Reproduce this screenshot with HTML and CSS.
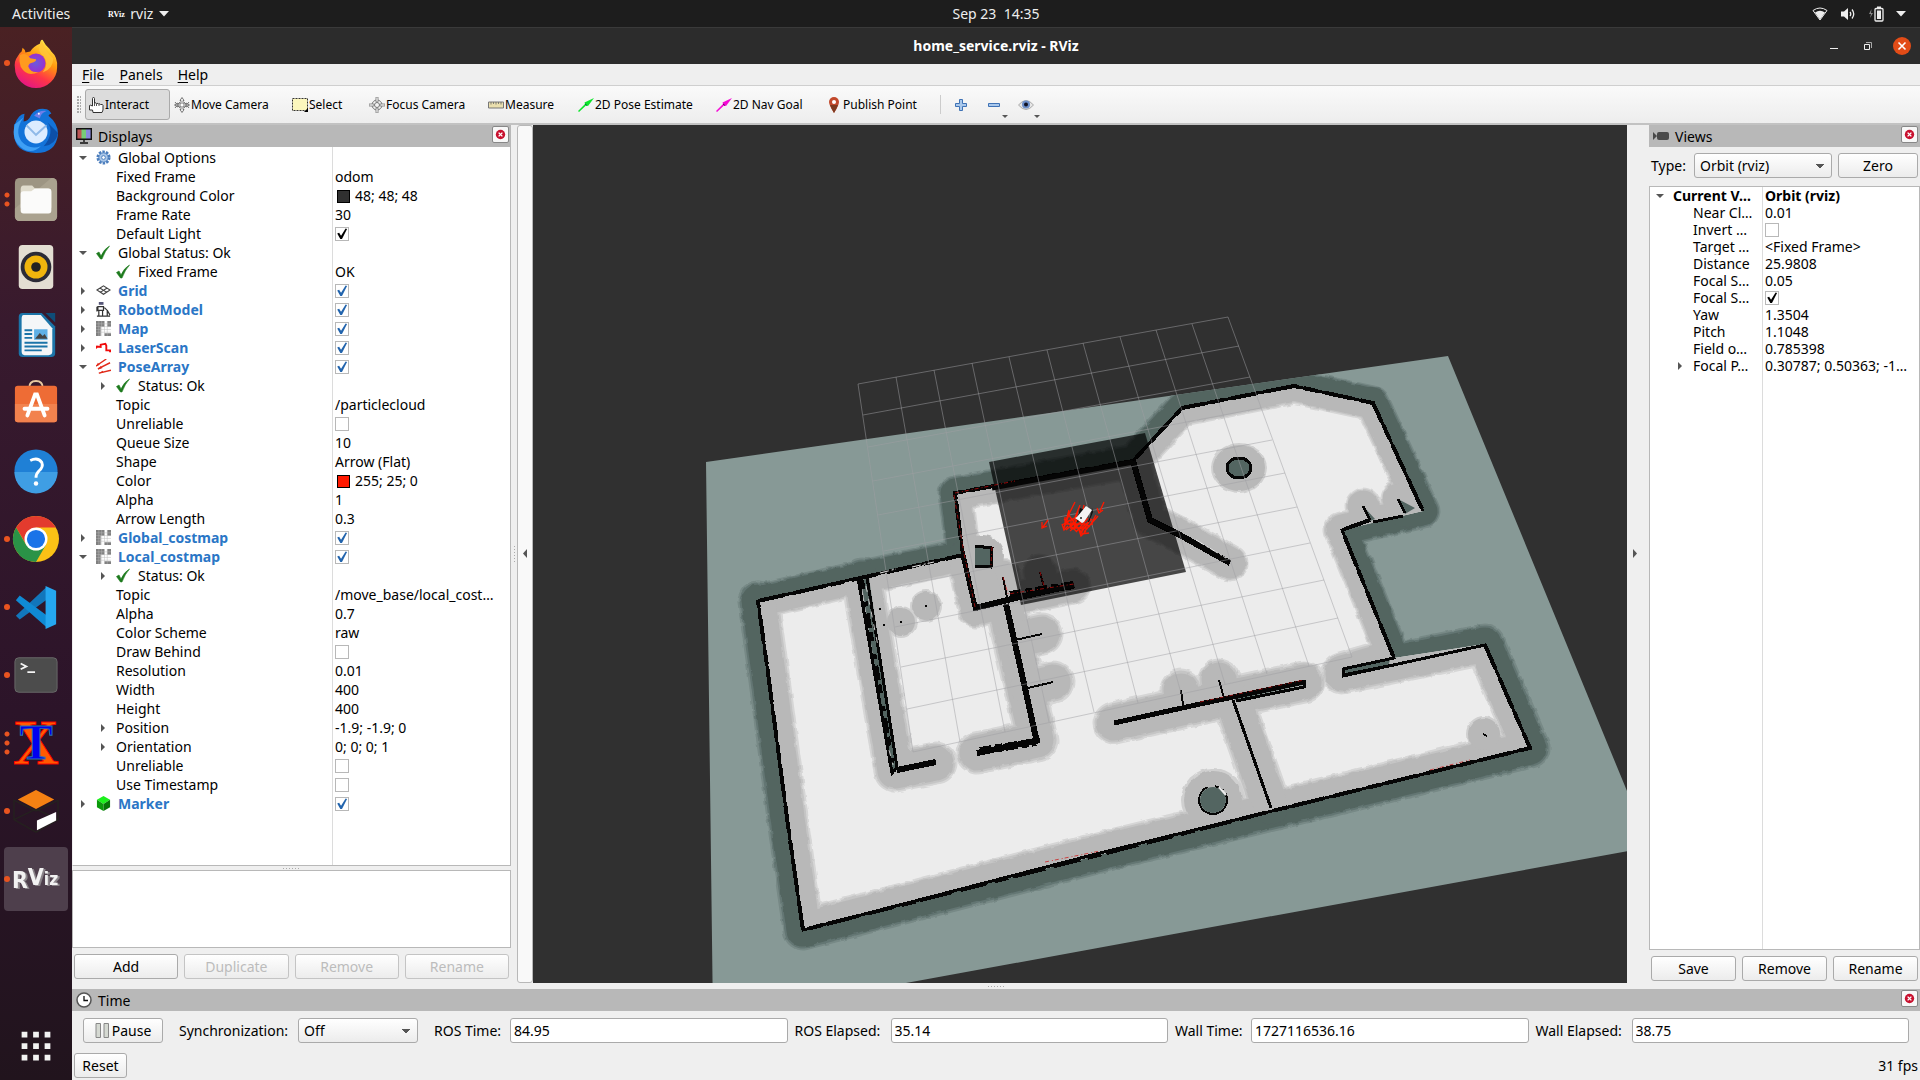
FILE: index.html
```html
<!DOCTYPE html>
<html lang="en">
<head>
<meta charset="utf-8">
<title>home_service.rviz - RViz</title>
<link rel="stylesheet" href="styles.css">
</head>
<body>
<svg class="defs" width="0" height="0" aria-hidden="true">
  <defs>
    <symbol id="i-down" viewBox="0 0 10 10"><path d="M1 3h8L5 7z" fill="#555"/></symbol>
    <symbol id="i-right" viewBox="0 0 10 10"><path d="M3 1v8l4-4z" fill="#555"/></symbol>
    <symbol id="i-ok" viewBox="0 0 15 15"><path d="M.5 8.500L3 7l2 4Q8 4 13.500 1Q9 6 6 14H4.500z" fill="#1d7a1d" stroke="#1d7a1d" stroke-width=".6"/></symbol>
    <symbol id="i-map" viewBox="0 0 16 16"><path d="M0 0h16v16H0z" fill="#fff"/><path d="M0 0h9v6H5v10H0zM12 0h4v6h-4zM9 13h7v3H9z" fill="#808080"/><path d="M3 0v16M6 0v16M9 0v16M12 0v16M0 3h16M0 6h16M0 9h16M0 12h16" stroke="#bbb" stroke-width=".5"/></symbol>
    <symbol id="i-close" viewBox="0 0 16 16"><circle cx="8" cy="8" r="5" fill="#c8102e"/><path d="M6 6l4 4M10 6l-4 4" stroke="#fff" stroke-width="1.500"/></symbol>
    <g id="far-walls">
      <path d="M758 601L858 578L963 555L955 493L1133 461L1182 408L1294 386L1373 403L1423 511L1342 530L1394 658"/>
      <path d="M1133 461L1150 520L1180 535L1230 563"/>
      <path d="M963 555L976 610L1020 597L1073 586"/>
      <path d="M1363 506l7 14M1398 499l7 14"/>
      <path d="M1040 572l4 15M1003 577l5 24"/>
    </g>
    <g id="near-walls">
      <path d="M758 601L768 673L789 833L803 930L1100 853L1272 811L1530 748L1485 644L1342 673L1394 658"/>
      <path d="M862 578L895 771L936 763"/>
      <path d="M1005 604L1037 740L977 753"/>
      <path d="M1015 640L1042 634M1028 688L1053 682"/>
      <path d="M1114 723L1200 704L1304 682M1181 690l2 15M1219 680l5 18"/>
      <path d="M1233 700L1271 808"/>
    </g>
    <clipPath id="room"><path d="M758 601L963 555L955 493L1133 461L1182 408L1294 386L1373 403L1423 511L1342 530L1394 658L1485 644L1530 748L1272 811L803 930L789 833z"/></clipPath>
    <clipPath id="map-area"><path d="M706 462L1448 356L1650 847L906 983L713 1019z"/></clipPath>
    <filter id="cells" x="-.1" y="-.1" width="1.200" height="1.200"><feTurbulence type="fractalNoise" baseFrequency=".14" numOctaves="1" seed="4"/><feDisplacementMap in="SourceGraphic" scale="4" xChannelSelector="R" yChannelSelector="G"/></filter>
  </defs>
</svg>

<header class="topbar">
  <div class="topbar-left">
    <button class="plain">Activities</button>
    <button class="plain app-menu">
      <svg width="16" height="14" viewBox="0 0 16 14"><text x="0" y="10" class="mini-logo">RViz</text></svg>
      rviz
      <svg width="10" height="6" viewBox="0 0 10 6"><path d="M0 0h10L5 5.500z" fill="#eee"/></svg>
    </button>
  </div>
  <div class="clock">Sep 23&nbsp; 14:35</div>
  <div class="tray">
    <svg width="16" height="14" viewBox="0 0 16 14"><path d="M1 3.500Q8-1.500 15 3.500L8 13z" fill="none" stroke="#eee"/><path d="M3 5.500Q8 2 13 5.500L8 12.500z" fill="#eee"/></svg>
    <svg width="16" height="14" viewBox="0 0 16 14"><path d="M1 4.500h3L8 1v12L4 9.500H1z" fill="#eee"/><path d="M10 5q1.500 2 0 4M12 2.500q3.500 4.500 0 9" fill="none" stroke="#eee" stroke-width="1.300"/></svg>
    <svg width="16" height="16" viewBox="0 0 16 16"><path d="M3.500 3L1 8h2l-1 4L5 7H3z" fill="#888"/><rect x="7" y="2.500" width="8" height="12.500" rx="1" fill="none" stroke="#eee" stroke-width="1.300"/><path d="M9 .5h4v2H9zM9 4.500h4v8.500H9z" fill="#eee"/></svg>
    <svg width="10" height="6" viewBox="0 0 10 6"><path d="M0 0h10L5 5.500z" fill="#eee"/></svg>
  </div>
</header>

<div class="desktop">
<nav class="dock" aria-label="Dock">
  <a href="#" class="d1" aria-label="Firefox"><svg viewBox="0 0 48 48"><defs><linearGradient id="ff" x1=".8" y1="0" x2=".3" y2="1"><stop offset="0" stop-color="#fff44f"/><stop offset=".4" stop-color="#ff980e"/><stop offset=".7" stop-color="#ff3647"/><stop offset="1" stop-color="#e31587"/></linearGradient><radialGradient id="fp"><stop offset="0" stop-color="#6a5bdc"/><stop offset="1" stop-color="#9a2fd0"/></radialGradient></defs><path d="M5 17Q7 13 9 12l1-4q3 2 3 5l5-1q4-6 10-8Q29-1 31 0q3 6 7 9l2 3q7 6 6 17A22 21 0 0 1 2 29Q1 22 5 17z" fill="url(#ff)"/><circle cx="24" cy="24" r="10" fill="url(#fp)"/><path d="M7 16q6-4 11 3l6 1q1 2-5 4-3 1-3 4 3 7 11 5-12 7-19-5-2-6-1-12z" fill="#ff9a1f"/><path d="M28 5q-3 7 4 12 6 8-1 17 11-4 11-15Q35 14 30 1z" fill="#ffc53a" opacity=".8"/></svg></a>
  <a href="#" aria-label="Thunderbird"><svg viewBox="0 0 48 48"><path d="M2 17Q6 6 12 6l-1 8q5 0 8-7 5-7 14-6 5 0 7 5-2 0-3 2 10 8 10 19-2 20-23 20Q1 46 1 26v-9z" fill="#1373d9"/><path d="M11 10Q1 24 9 35q8 9 20 5-8 8-18 3Q-3 34 2 17z" fill="#3fa0f5"/><circle cx="24" cy="25" r="12" fill="#dcecff"/><path d="M14 18l10 10 11-10" fill="none" stroke="#8fb9e8" stroke-width="2"/><path d="M22 8q5-6 13-5-6 2-7 8z" fill="#6f7ee8"/><circle cx="27" cy="6" r="1" fill="#fff"/><path d="M36 15q8 10-4 25 13-2 15-14z" fill="#0d4fa8"/></svg></a>
  <a href="#" class="d2" aria-label="Files"><svg viewBox="0 0 48 48"><rect x="2" y="2" width="44" height="45" rx="5" fill="#9d9583"/><path d="M2 34L40 2q6 0 6 6v34q0 5-5 5H7q-5 0-5-5z" fill="#aaa28f"/><path d="M8 14q0-4 3-4h9l3 3h13q4 0 4 4v16H8z" fill="#e0dccd"/><path d="M8 19q0-3 3-3h8l4-3h14q3 0 3 3v20q0 3-3 3H11q-3 0-3-3z" fill="#fbfbfa"/></svg></a>
  <a href="#" aria-label="Rhythmbox"><svg viewBox="0 0 48 48"><rect x="6" y="1" width="36" height="46" rx="4" fill="#e3ded2"/><circle cx="24" cy="24" r="16" fill="#2b2b36"/><circle cx="24" cy="24" r="12" fill="#f0b50d"/><circle cx="24" cy="24" r="5" fill="#222"/></svg></a>
  <a href="#" aria-label="LibreOffice Writer"><svg viewBox="0 0 48 48"><path d="M10 1h20l14 14v28q0 4-4 4H10q-4 0-4-4V5q0-4 4-4z" fill="#1b74a8"/><path d="M34 1h10v10z" fill="#0e4d78"/><path d="M11 3h18l12 14v24q0 4-4 4H12q-3 0-3-4V7q0-4 2-4z" fill="#f4f6f8"/><path d="M12 19h8M12 23h8M12 27h8M12 32h24M12 36h24M12 40h18" stroke="#1b74a8" stroke-width="2"/><path d="M22 18h14v11H22z" fill="#5fb0e6"/><path d="M23 28l5-6 3 3 2-2 3 5z" fill="#444"/></svg></a>
  <a href="#" aria-label="Ubuntu Software"><svg viewBox="0 0 48 48"><path d="M17 8q0-7 7-7t7 7" fill="none" stroke="#e8c9a0" stroke-width="2"/><rect x="2" y="6" width="44" height="38" rx="3" fill="#ee6c35"/><path d="M2 25h44v16q0 3-3 3H5q-3 0-3-3z" fill="#f2824e"/><path d="M15 37l8-22h2l8 22M12 30h24" fill="none" stroke="#fff" stroke-width="4" stroke-linecap="round"/></svg></a>
  <a href="#" aria-label="Help"><svg viewBox="0 0 48 48"><circle cx="24" cy="24" r="22.500" fill="#1f80d6"/><path d="M1.500 25h45a22.500 22.500 0 0 1-45 0z" fill="#3f9ee4"/><path d="M18 13q8-4 12 2 2 5-3 9-3 3-3 7" fill="none" stroke="#fff" stroke-width="3"/><circle cx="24" cy="37" r="2.300" fill="#fff"/></svg></a>
  <a href="#" class="d1" aria-label="Chrome"><svg viewBox="0 0 48 48"><circle cx="24" cy="24" r="24" fill="#fbc116"/><path d="M24 12h20.800A24 24 0 0 0 3.200 12L14 30z" fill="#e33b2e"/><path d="M3.200 12A24 24 0 0 0 24 48l10.400-18L24 36 13.600 30z" fill="#2a9347"/><circle cx="24" cy="24" r="12" fill="#fff"/><circle cx="24" cy="24" r="9.500" fill="#1a73e8"/></svg></a>
  <a href="#" class="d1" aria-label="Visual Studio Code"><svg viewBox="0 0 48 48"><path d="M35 3L3 33l4 4L45 9z" fill="#1276bb"/><path d="M35 45L3 17l4-5 38 28z" fill="#0f8ad4"/><path d="M34 2l11 5v35l-11 5z" fill="#25a7f0"/></svg></a>
  <a href="#" class="d1" aria-label="Terminal"><svg viewBox="0 0 48 48"><rect x="2" y="6" width="44" height="36" rx="4" fill="#4c4c4c" stroke="#686868"/><path d="M8 12l6 3-6 3M15 21h8" fill="none" stroke="#f4f4f4" stroke-width="1.800"/></svg></a>
  <a href="#" class="d3" aria-label="XTerm"><svg viewBox="0 0 48 48"><text x="24" y="46" class="xterm-x">X</text><text x="24" y="41" class="xterm-t">T</text></svg></a>
  <a href="#" class="d1" aria-label="Gazebo"><svg viewBox="0 0 48 48"><path d="M1 13l23 11L47 13v20L24 46 1 33zM1 33l23-11 23 11" fill="none" stroke="#25211f" stroke-width="1.500"/><path d="M24 2l19 10-19 10L5 12z" fill="#f58113"/><path d="M25 34l20-9v9L25 44z" fill="#fff"/></svg></a>
  <a href="#" class="d1 active" aria-label="RViz"><svg viewBox="0 0 48 48" aria-hidden="true"><text x="23" y="33" class="rviz-logo"><tspan class="big">R</tspan><tspan class="big" dy="-3">V</tspan>iz</text></svg></a>
  <a href="#" class="apps" aria-label="Show Applications"><svg viewBox="0 0 48 48"><path d="M12 9v31M24 9v31M36 9v31" stroke="#f2f2f2" stroke-width="6" stroke-dasharray="6 6"/></svg></a>
</nav>

<main class="window">
  <div class="titlebar">
    <h1>home_service.rviz - RViz</h1>
    <div class="win-buttons">
      <button class="plain" aria-label="Minimize"><svg width="18" height="18" viewBox="0 0 18 18"><path d="M5 11.500h8" stroke="#eee"/></svg></button>
      <button class="plain" aria-label="Restore"><svg width="18" height="18" viewBox="0 0 18 18"><path d="M5.500 7.500h5v5h-5z" fill="none" stroke="#eee"/><path d="M7 5.500h5.500V11" fill="none" stroke="#aaa"/></svg></button>
      <button class="plain" aria-label="Close"><svg width="18" height="18" viewBox="0 0 18 18"><circle cx="9" cy="9" r="9" fill="#e24c17"/><path d="M5.500 5.500l7 7M12.500 5.500l-7 7" stroke="#fff" stroke-width="1.600"/></svg></button>
    </div>
  </div>
  <nav class="menubar">
    <a href="#"><u>F</u>ile</a><a href="#"><u>P</u>anels</a><a href="#"><u>H</u>elp</a>
  </nav>
  <div class="toolbar">
    <span class="grip"></span>
    <button class="tool pressed"><svg viewBox="0 0 16 16"><path d="M4.500 9V1.500q0-1 1-1t1 1V6q2-.5 2 .5 2-.5 2 .5 2-.5 2 .5 2.500-.5 2.500 1V13l-1 2.500h-9L4.500 13H1.500V8.500q0-1 3 .5z" fill="#fff" stroke="#333"/><path d="M6.500 6v3M8.500 7v2M11 7v2" stroke="#555"/></svg>Interact</button>
    <button class="tool"><svg viewBox="0 0 16 16"><path d="M8 .5l2 3H9v3.500h3V6l3.500 2L12 10V9H9v3.500h1l-2 3-2-3h1V9H4v1L.5 8 4 6v1h3V3.500H6zM1 5l5 6M15 5l-5 6M1 11l5-6M15 11l-5-6" fill="#fff" stroke="#666" stroke-width=".9"/></svg>Move Camera</button>
    <button class="tool"><svg viewBox="0 0 16 16"><path d="M.5 1.500h15v12H.5z" fill="#fcf7bd" stroke="#333" stroke-dasharray="2 1"/><path d="M16 11v4h-4z" fill="#000"/></svg>Select</button>
    <button class="tool"><svg viewBox="0 0 16 16"><circle cx="8" cy="8" r="5" fill="none" stroke="#777"/><circle cx="8" cy="8" r="2.500" fill="none" stroke="#777"/><path d="M7 0h2v5H7zM7 11h2v5H7zM0 7h5v2H0zM11 7h5v2h-5z" fill="#fff" stroke="#777" stroke-width=".8"/></svg>Focus Camera</button>
    <button class="tool"><svg viewBox="0 0 16 16"><path d="M.5 5h15v6H.5z" fill="#eadfae" stroke="#777"/><path d="M3 5v2.500M5.500 5v2M8 5v2.500M10.500 5v2M13 5v2.500" stroke="#666" stroke-width=".8"/></svg>Measure</button>
    <button class="tool"><svg viewBox="0 0 16 16"><path d="M0 14l7-7-.5-1.500L16 1l-6 8-2-.5-7 6.500z" fill="#0ee62c"/><path d="M7 7l2 1.500" stroke="#064" /></svg>2D Pose Estimate</button>
    <button class="tool"><svg viewBox="0 0 16 16"><path d="M0 14l7-7-.5-1.500L16 1l-6 8-2-.5-7 6.500z" fill="#f50ad5"/><path d="M7 7l2 1.500" stroke="#606" /></svg>2D Nav Goal</button>
    <button class="tool"><svg viewBox="0 0 16 16"><path d="M8 16Q3 8 3 5a5 5 0 0 1 10 0q0 3-5 11z" fill="#c2492c"/><path d="M8 16Q5 11 4 8h8q-1 3-4 8z" fill="#7d3a20"/><circle cx="8" cy="5" r="2" fill="#fff"/></svg>Publish Point</button>
    <span class="sep"></span>
    <button class="plain icon-tool" aria-label="Add tool"><svg viewBox="0 0 16 16"><path d="M6.500 2.500h3v4h4v3h-4v4h-3v-4h-4v-3h4z" fill="#a9c8ec" stroke="#3f72b5"/></svg></button>
    <button class="plain icon-tool more" aria-label="Remove tool"><svg viewBox="0 0 16 16"><path d="M2.500 6.500h11v3h-11z" fill="#a9c8ec" stroke="#3f72b5"/></svg></button>
    <button class="plain icon-tool more" aria-label="Visibility"><svg viewBox="0 0 16 16"><path d="M.5 8Q8-1 15.500 8 8 17 .5 8z" fill="#e6e6e6" stroke="#aaa"/><circle cx="8" cy="7.500" r="4" fill="#6d8fc9"/><circle cx="8" cy="7.500" r="2" fill="#112"/></svg></button>
  </div>

  <div class="content">
    <section class="panel displays">
      <h2 class="dock-title"><svg viewBox="0 0 16 16"><path d="M1 1h14v10H1z" fill="#b55"/><path d="M5.500 1H10v10H5.500z" fill="#7c7"/><path d="M10 1h5v10h-5z" fill="#88d"/><path d="M.7.700h14.600v10.600H.7zM8 11v3M4 15h8" fill="none" stroke="#111" stroke-width="1.400"/></svg><span>Displays</span><button class="dock-close" aria-label="Close Displays"><svg viewBox="0 0 16 16"><use href="#i-close"/></svg></button></h2>
      <div class="tree">
        <table>
          <colgroup><col class="c-name"><col></colgroup>
          <tbody>
          <tr><td><div class="n"><svg class="tw"><use href="#i-down"/></svg><svg class="ic" viewBox="0 0 16 16"><circle cx="8" cy="8" r="6" fill="none" stroke="#4a7dbd" stroke-width="3" stroke-dasharray="2.500 1.270"/><circle cx="8" cy="8" r="5" fill="#a9c6e8" stroke="#4a7dbd"/><circle cx="8" cy="8" r="2" fill="#fff" stroke="#4a7dbd"/></svg>Global Options</div></td><td></td></tr>
          <tr><td><div class="n sub"><i class="tw"></i>Fixed Frame</div></td><td>odom</td></tr>
          <tr><td><div class="n sub"><i class="tw"></i>Background Color</div></td><td><i class="swatch dark"></i>48; 48; 48</td></tr>
          <tr><td><div class="n sub"><i class="tw"></i>Frame Rate</div></td><td>30</td></tr>
          <tr><td><div class="n sub"><i class="tw"></i><label for="k1">Default Light</label></div></td><td><input type="checkbox" id="k1" class="black" checked></td></tr>
          <tr><td><div class="n"><svg class="tw"><use href="#i-down"/></svg><svg class="ic"><use href="#i-ok"/></svg>Global Status: Ok</div></td><td></td></tr>
          <tr><td><div class="n sub"><i class="tw"></i><svg class="ic"><use href="#i-ok"/></svg>Fixed Frame</div></td><td>OK</td></tr>
          <tr><td><div class="n b"><svg class="tw"><use href="#i-right"/></svg><svg class="ic" viewBox="0 0 16 16"><path d="M1 7.500L8 3l7 4.500L8 12zM4.500 5.500l7 4.500M11.500 5.500l-7 4.500" fill="none" stroke="#444" stroke-width="1.200"/></svg><label for="k2">Grid</label></div></td><td><input type="checkbox" id="k2" checked></td></tr>
          <tr><td><div class="n b"><svg class="tw"><use href="#i-right"/></svg><svg class="ic" viewBox="0 0 16 16"><path d="M3 0h5v3H3z" fill="#557"/><path d="M2 5h6v4H2zM3 9v6M7 9v6M1 5v5M9 6l3 3v6M12 9l3 5M1 15h14" fill="none" stroke="#333" stroke-width="1.300"/></svg><label for="k3">RobotModel</label></div></td><td><input type="checkbox" id="k3" checked></td></tr>
          <tr><td><div class="n b"><svg class="tw"><use href="#i-right"/></svg><svg class="ic"><use href="#i-map"/></svg><label for="k4">Map</label></div></td><td><input type="checkbox" id="k4" checked></td></tr>
          <tr><td><div class="n b"><svg class="tw"><use href="#i-right"/></svg><svg class="ic" viewBox="0 0 16 16"><path d="M0 9l1-2 4 .5V5l5-1 1 2v5h4v2" fill="none" stroke="#f00a0a" stroke-width="2"/></svg><label for="k5">LaserScan</label></div></td><td><input type="checkbox" id="k5" checked></td></tr>
          <tr><td><div class="n b"><svg class="tw"><use href="#i-down"/></svg><svg class="ic" viewBox="0 0 16 16"><path d="M0 7.500L11 0M2 10.500L15 4M3 15l13-3" stroke="#e12a1a" stroke-width="1.500"/><path d="M0 8l2-4 2 2zM2 11.500l3-4 2 2zM3 15.500l4-3 1 2z" fill="#e12a1a"/></svg><label for="k6">PoseArray</label></div></td><td><input type="checkbox" id="k6" checked></td></tr>
          <tr><td><div class="n sub"><svg class="tw"><use href="#i-right"/></svg><svg class="ic"><use href="#i-ok"/></svg>Status: Ok</div></td><td></td></tr>
          <tr><td><div class="n sub"><i class="tw"></i>Topic</div></td><td>/particlecloud</td></tr>
          <tr><td><div class="n sub"><i class="tw"></i><label for="k7">Unreliable</label></div></td><td><input type="checkbox" id="k7"></td></tr>
          <tr><td><div class="n sub"><i class="tw"></i>Queue Size</div></td><td>10</td></tr>
          <tr><td><div class="n sub"><i class="tw"></i>Shape</div></td><td>Arrow (Flat)</td></tr>
          <tr><td><div class="n sub"><i class="tw"></i>Color</div></td><td><i class="swatch red"></i>255; 25; 0</td></tr>
          <tr><td><div class="n sub"><i class="tw"></i>Alpha</div></td><td>1</td></tr>
          <tr><td><div class="n sub"><i class="tw"></i>Arrow Length</div></td><td>0.3</td></tr>
          <tr><td><div class="n b"><svg class="tw"><use href="#i-right"/></svg><svg class="ic"><use href="#i-map"/></svg><label for="k8">Global_costmap</label></div></td><td><input type="checkbox" id="k8" checked></td></tr>
          <tr><td><div class="n b"><svg class="tw"><use href="#i-down"/></svg><svg class="ic"><use href="#i-map"/></svg><label for="k9">Local_costmap</label></div></td><td><input type="checkbox" id="k9" checked></td></tr>
          <tr><td><div class="n sub"><svg class="tw"><use href="#i-right"/></svg><svg class="ic"><use href="#i-ok"/></svg>Status: Ok</div></td><td></td></tr>
          <tr><td><div class="n sub"><i class="tw"></i>Topic</div></td><td>/move_base/local_cost…</td></tr>
          <tr><td><div class="n sub"><i class="tw"></i>Alpha</div></td><td>0.7</td></tr>
          <tr><td><div class="n sub"><i class="tw"></i>Color Scheme</div></td><td>raw</td></tr>
          <tr><td><div class="n sub"><i class="tw"></i><label for="k10">Draw Behind</label></div></td><td><input type="checkbox" id="k10"></td></tr>
          <tr><td><div class="n sub"><i class="tw"></i>Resolution</div></td><td>0.01</td></tr>
          <tr><td><div class="n sub"><i class="tw"></i>Width</div></td><td>400</td></tr>
          <tr><td><div class="n sub"><i class="tw"></i>Height</div></td><td>400</td></tr>
          <tr><td><div class="n sub"><svg class="tw"><use href="#i-right"/></svg>Position</div></td><td>-1.9; -1.9; 0</td></tr>
          <tr><td><div class="n sub"><svg class="tw"><use href="#i-right"/></svg>Orientation</div></td><td>0; 0; 0; 1</td></tr>
          <tr><td><div class="n sub"><i class="tw"></i><label for="k11">Unreliable</label></div></td><td><input type="checkbox" id="k11"></td></tr>
          <tr><td><div class="n sub"><i class="tw"></i><label for="k12">Use Timestamp</label></div></td><td><input type="checkbox" id="k12"></td></tr>
          <tr><td><div class="n b"><svg class="tw"><use href="#i-right"/></svg><svg class="ic" viewBox="0 0 16 16"><path d="M8 0l7 4-7 4.500L1 4z" fill="#1cf01c"/><path d="M1 4l7 4.500V16l-7-4z" fill="#0a9a0a"/><path d="M15 4L8 8.500V16l7-4z" fill="#067506"/></svg><label for="k13">Marker</label></div></td><td><input type="checkbox" id="k13" checked></td></tr>
          </tbody>
        </table>
      </div>
      <div class="split"><span class="dots"></span></div>
      <div class="help"></div>
      <div class="actions">
        <button>Add</button><button disabled>Duplicate</button><button disabled>Remove</button><button disabled>Rename</button>
      </div>
    </section>

    <div class="gutter"><span class="vdots"></span></div>
    <button class="collapse left" aria-label="Hide left panel"><svg width="8" height="10" viewBox="0 0 8 10"><path d="M6 0v9L2 4.500z" fill="#555"/></svg></button>

    <div class="view">
      <svg viewBox="533 125 1094 858" preserveAspectRatio="xMidYMid slice" role="img" aria-label="3D view of the map">
        <path d="M706 462L1448 356L1650 847L906 983L713 1019z" fill="#879996"/>
        <g clip-path="url(#map-area)">
          <g fill="none" stroke-linejoin="round" stroke-linecap="round" filter="url(#cells)">
            <g stroke="#778986"><use href="#far-walls" stroke-width="35"/><use href="#near-walls" stroke-width="41"/></g>
            <g stroke="#647673"><use href="#far-walls" stroke-width="32"/><use href="#near-walls" stroke-width="37"/></g>
            <g stroke="#536561"><use href="#far-walls" stroke-width="29"/><use href="#near-walls" stroke-width="33"/></g>
          </g>
        </g>
        <g clip-path="url(#room)">
          <path d="M700 350h900v600H700z" fill="#ececec"/>
          <g fill="none" stroke-linejoin="round" stroke-linecap="round" filter="url(#cells)">
            <g stroke="#d6d6d6"><use href="#far-walls" stroke-width="37"/><use href="#near-walls" stroke-width="43"/></g>
            <g fill="#d0d0d0" stroke="none"><ellipse cx="1239" cy="468" rx="28" ry="25"/><circle cx="1213" cy="800" r="32"/><circle cx="1484" cy="734" r="18"/><circle cx="926" cy="606" r="16"/><circle cx="901" cy="622" r="16"/></g>
            <g stroke="#c5c5c5"><use href="#far-walls" stroke-width="34"/><use href="#near-walls" stroke-width="39"/></g>
            <g stroke="#b8b8b8"><use href="#far-walls" stroke-width="31"/><use href="#near-walls" stroke-width="35"/></g>
            <g fill="#b8b8b8" stroke="none"><ellipse cx="1239" cy="468" rx="26" ry="23"/><circle cx="1213" cy="800" r="29"/><circle cx="1484" cy="734" r="16"/><circle cx="926" cy="606" r="14"/><circle cx="901" cy="622" r="14"/><circle cx="983" cy="556" r="21"/><path d="M960 560l14 50 32-6-20-60z"/></g>
          </g>
        </g>
        <g fill="#536561"><path d="M861 580l8-2 28 190-6 2zM1363 506l12 13-5 2zM1398 499l17 9-10 6zM975 546l17 2-1 19-16-1zM1235 700l68-15-1-4-70 15zM1344 669l46-9-2 6-42 8z"/><ellipse cx="1239" cy="468" rx="12" ry="10"/><circle cx="1213" cy="800" r="13"/></g>
        <g class="walls" shape-rendering="crispEdges">
          <path d="M1370 520L1342 530L1394 658L1343 669v7L1485 645L1530 748L1272 811L1100 853L803 930L789 833L768 673L758 601L858 578L963 555L955 493L1133 461L1182 408L1294 386L1373 403L1423 511" stroke-width="3"/>
          <path d="M758 601L963 555L955 493L1133 461L1182 408L1294 386L1373 403L1423 511M1370 520L1342 530L1394 658M1485 645L1530 748L1272 811L803 930L789 833L768 673L758 601" stroke-width="4" stroke-dasharray="27 9 33 5 14 8"/>
          <path d="M858 578l34 195 5-6-30-190M1373 522l30-6" stroke-width="3"/>
          <path d="M861 580l32 192" stroke-width="6" stroke-dasharray="9 13 5 7 15 4"/>
          <path d="M897 770L936 762" stroke-width="6"/>
          <path d="M963 555L976 611" stroke-width="5"/>
          <path d="M975 608L1020 597L1074 585M1006 604L1021 670L1036 738M977 753L1040 740" stroke-width="6"/>
          <path d="M1010 595L1074 585M980 751L1036 742" stroke-width="8" stroke-dasharray="12 4 7 3"/>
          <path d="M1015 640L1042 634M1028 688L1053 682M1003 577l4 20M1040 572l4 15M1181 690l2 15M1219 680l5 18" stroke-width="2"/>
          <path d="M1133 461L1150 520L1180 535L1230 563" stroke-width="6"/>
          <path d="M1114 723L1200 704L1304 682" stroke-width="5"/>
          <path d="M1236 701L1304 687M1304 680v8M1233 700L1271 808M1343 675l50-10" stroke-width="3"/>
          <path d="M1363 506l7 14M1398 499l7 14" stroke-width="3"/>
          <path d="M975 546l17 2-1 19-16-1" stroke-width="3"/>
          <ellipse cx="1239" cy="468" rx="12" ry="10" stroke-width="3"/>
          <circle cx="1213" cy="800" r="14" stroke-width="2" stroke-dasharray="60 8 9 4"/>
          <path d="M925 606h2M900 622h2M879 609h2M883 625h2M1483 734l4 2" stroke-width="2"/>
        </g>
        <g stroke="#ececec" fill="none" stroke-width="1"><path d="M880 573l16-4M912 567l22-5M1196 540l30 18" stroke-dasharray="9 3 2 2"/><path d="M1219 787l7 8" stroke-width="2"/><path d="M866 586l12 60M889 750l4 15" stroke="#c9c9c9" stroke-dasharray="6 7"/></g>
        <path d="M989 462L1145 433L1186 572L1021 605z" fill="#000" fill-opacity=".7"/>
        <path d="M1133 461L1150 520L1180 535M1008 600L1020 597L1074 585M992 488l141-26" fill="none" stroke="#050505" stroke-width="5"/>
        <path d="M955 493L1015 481M954 495l10 58 11 54M992 547l-1 18M1003 577l5 17 66-10M1040 572l4 14M1200 702l104-22M1045 862l55-11M1430 770l40-10" fill="none" stroke="#d01010" stroke-width="1" stroke-dasharray="4 3 1 2" opacity=".7"/>
        <g fill="none" stroke="#a0a0a4" stroke-opacity=".5">
          <path d="M858 384L1228 317M863 415L1239 346M868 447L1250 377M873 481L1261 408M878 515L1272 440M884 551L1285 473M889 588L1297 507M895 627L1310 543M901 667L1324 580M907 709L1338 618M913 752L1352 657"/>
          <path d="M858 384L913 752M896 377L960 742M934 370L1005 732M972 363L1049 722M1009 357L1094 712M1047 350L1138 703M1083 343L1181 693M1120 337L1225 684M1156 330L1267 674M1192 324L1309 666M1228 317L1352 657"/>
        </g>
        <g fill="none" stroke="#ff1900" stroke-width="1.300">
          <path d="M1075 502l-10 20m0-5v6l5-3M1080 505l-8 20m-1-5v6l5-3M1069 510l-5 18m-2-4l2 6 4-4M1098 516l-14 16m-2-5v7l7-1M1104 502l-4 9m-3-3l2 5 4-3M1048 520l-5 7m-1-5v6l5-2M1062 525l14-8M1066 530l14-12M1070 531l14-12M1076 532l12-14M1080 534l9-12m-10 8l2 6 5-5M1064 519l12 12M1068 514l13 18M1085 519l-12 10M1092 519l-12 10M1066 524h22M1070 528h18M1078 510l-4 18M1084 505l-3 14M1089 527l7-12M1064 528l6-16M1093 524l-9 3"/>
        </g>
        <path d="M1080 508l5 2-3 10-5 2zM1088 522l3-8 1-6 1 4-4 10z" fill="#0b0b0b"/><path d="M1086 506l6 4-8 12-2 1-7-5 2-1z" fill="#f3f3f3"/><circle cx="1081" cy="518" r="1" fill="#222"/>
      </svg>
    </div>

    <button class="collapse right" aria-label="Hide right panel"><svg width="8" height="10" viewBox="0 0 8 10"><path d="M2 0v9l4-4.500z" fill="#555"/></svg></button>

    <section class="panel views">
      <h2 class="dock-title"><svg viewBox="0 0 16 16"><path d="M0 4l4 4-4 4zM6 4h8q2 0 2 2v4q0 2-2 2H6q-2 0-2-2V6q0-2 2-2z" fill="#4a4a4a"/></svg><span>Views</span><button class="dock-close" aria-label="Close Views"><svg viewBox="0 0 16 16"><use href="#i-close"/></svg></button></h2>
      <div class="type-row"><label for="vtype">Type:</label><select id="vtype"><option>Orbit (rviz)</option></select><button>Zero</button></div>
      <div class="tree">
        <table>
          <colgroup><col class="c-name"><col></colgroup>
          <tbody>
          <tr class="strong"><td><div class="n"><svg class="tw"><use href="#i-down"/></svg>Current V…</div></td><td>Orbit (rviz)</td></tr>
          <tr><td><div class="n sub"><i class="tw"></i>Near Cl…</div></td><td>0.01</td></tr>
          <tr><td><div class="n sub"><i class="tw"></i><label for="v1">Invert …</label></div></td><td><input type="checkbox" id="v1"></td></tr>
          <tr><td><div class="n sub"><i class="tw"></i>Target …</div></td><td>&lt;Fixed Frame&gt;</td></tr>
          <tr><td><div class="n sub"><i class="tw"></i>Distance</div></td><td>25.9808</td></tr>
          <tr><td><div class="n sub"><i class="tw"></i>Focal S…</div></td><td>0.05</td></tr>
          <tr><td><div class="n sub"><i class="tw"></i><label for="v2">Focal S…</label></div></td><td><input type="checkbox" id="v2" class="black" checked></td></tr>
          <tr><td><div class="n sub"><i class="tw"></i>Yaw</div></td><td>1.3504</td></tr>
          <tr><td><div class="n sub"><i class="tw"></i>Pitch</div></td><td>1.1048</td></tr>
          <tr><td><div class="n sub"><i class="tw"></i>Field o…</div></td><td>0.785398</td></tr>
          <tr><td><div class="n sub"><svg class="tw"><use href="#i-right"/></svg>Focal P…</div></td><td>0.30787; 0.50363; -1…</td></tr>
          </tbody>
        </table>
      </div>
      <div class="actions"><button>Save</button><button>Remove</button><button>Rename</button></div>
    </section>
  </div>

  <div class="split wide"><span class="dots"></span></div>

  <section class="time">
    <h2 class="dock-title"><svg viewBox="0 0 16 16"><circle cx="8" cy="8" r="7" fill="#fff" stroke="#555" stroke-width="1.500"/><path d="M8 4v4.500h4" fill="none" stroke="#111" stroke-width="1.300"/></svg><span>Time</span><button class="dock-close" aria-label="Close Time"><svg viewBox="0 0 16 16"><use href="#i-close"/></svg></button></h2>
    <div class="time-row">
      <button class="pause"><svg width="15" height="15" viewBox="0 0 15 15"><path d="M1 .5h4.500v14H1zM9 .5h4.500v14H9z" fill="#d5d9d2" stroke="#888"/></svg>Pause</button>
      <label class="sync" for="sync">Synchronization:</label><select id="sync"><option>Off</option></select>
      <label class="first short" for="t1">ROS Time:</label><input type="text" id="t1" value="84.95">
      <label for="t2">ROS Elapsed:</label><input type="text" id="t2" value="35.14">
      <label class="short" for="t3">Wall Time:</label><input type="text" id="t3" value="1727116536.16">
      <label for="t4">Wall Elapsed:</label><input type="text" id="t4" value="38.75">
    </div>
  </section>
  <footer class="status"><button>Reset</button><span>31 fps</span></footer>
</main>
</div>
</body>
</html>
```
FILE: styles.css
```css
* { box-sizing: border-box; }

html, body { height: 100%; }

body {
  margin: 0;
  display: flex;
  flex-direction: column;
  overflow: hidden;
  background: #efefef;
  color: #000;
  font: 14px/18px "Noto Sans", "Open Sans", sans-serif;
}

button, input, select { font: inherit; color: inherit; }
.defs { position: absolute; }
.plain { border: 0; padding: 0; background: none; }

/* desktop shell */
.topbar {
  flex: none;
  height: 27px;
  display: grid;
  grid-template-columns: 72px 1fr auto 1fr;
  align-items: center;
  background: #1d1d1d;
  color: #eee;
}
.topbar-left {
  grid-column: 1 / 3;
  display: flex;
  align-items: center;
  gap: 38px;
  padding-left: 12px;
}
.app-menu { display: flex; align-items: center; gap: 6px; }
.app-menu svg { overflow: visible; }
.tray {
  display: flex;
  justify-content: flex-end;
  align-items: center;
  gap: 12px;
  padding-right: 14px;
}
.mini-logo { font: bold 8px "Liberation Serif", serif; fill: #fff; }

.desktop { flex: 1; min-height: 0; display: flex; }

.dock {
  flex: none;
  width: 72px;
  display: flex;
  flex-direction: column;
  align-items: center;
  gap: 4px;
  padding: 4px 0 2px;
  background: linear-gradient(#4a2123, #381a2e 28%, #2c1429 65%, #21141d);
}
.dock a {
  flex: none;
  position: relative;
  width: 64px;
  height: 64px;
  display: grid;
  place-items: center;
  border-radius: 4px;
}
.dock svg { width: 46px; height: 46px; overflow: visible; }
.dock .active { background: #4e3f4c; }
.dock .apps { margin-top: auto; }
.dock a::before {
  content: "";
  position: absolute;
  left: 0;
  width: 6px;
  height: 6px;
  border-radius: 3px;
  background: transparent;
}
.dock .d1::before { background: #e95420; }
.dock .d2::before {
  height: 15px;
  background: radial-gradient(circle at 3px 3px, #e95420 2px, transparent 3px) 0 0 / 6px 9px;
}
.dock .d3::before {
  height: 24px;
  background: radial-gradient(circle at 3px 3px, #e95420 2px, transparent 3px) 0 0 / 6px 9px;
}
.xterm-x { font: bold 66px "Liberation Serif", serif; fill: #ff5a00; stroke: #f00; text-anchor: middle; }
.xterm-t { font: bold 52px "Liberation Serif", serif; fill: #0000f0; stroke: #2b7ab0; text-anchor: middle; }
.rviz-logo { font: bold 18px "DejaVu Sans Condensed", sans-serif; text-anchor: middle; fill: #f2f2f2; filter: drop-shadow(2px 1px 0 #8c868b); }
.rviz-logo .big { font-size: 24px; }

/* window frame */
.window { flex: 1; min-width: 0; display: flex; flex-direction: column; }

.titlebar {
  flex: none;
  height: 37px;
  display: grid;
  grid-template-columns: 1fr auto 1fr;
  align-items: center;
  border-top: 1px solid #3a3a3a;
  background: #2c2c2c;
  color: #fff;
}
.titlebar h1 { grid-column: 2; margin: 0; font-size: 14px; }
.win-buttons { display: flex; justify-content: flex-end; gap: 16px; padding-right: 9px; }
.win-buttons button, .win-buttons svg { display: block; }

.menubar {
  flex: none;
  height: 22px;
  display: flex;
  align-items: center;
  gap: 15px;
  padding-left: 10px;
  border-bottom: 1px solid #cfcfcf;
}
.menubar a { color: inherit; text-decoration: none; }
.menubar u { text-underline-offset: 2px; }

.toolbar {
  flex: none;
  height: 39px;
  display: grid;
  grid-template-columns: 13px 86px 118px 77px 119px 90px 138px 110px 112px auto auto auto auto;
  justify-content: start;
  align-items: center;
  border-bottom: 2px solid #c2c2c2;
  background: linear-gradient(#fafafa, #ededed);
}
.grip {
  width: 4px;
  height: 18px;
  margin-left: 5px;
  background: radial-gradient(circle at 1px 1px, #aaa 1px, transparent 1px) 0 0 / 3px 3px;
}
.tool {
  height: 31px;
  display: flex;
  align-items: center;
  gap: 1px;
  padding: 1px 2px 0;
  border: 1px solid transparent;
  border-radius: 3px;
  background: none;
  font-size: 12px;
  white-space: nowrap;
}
.tool svg, .icon-tool svg { flex: none; width: 16px; height: 16px; display: block; }
.tool.pressed { width: 85px; border-color: #aaa; background: #dcdcdc; }
.sep { width: 1px; height: 19px; margin: 0 12px 0 5px; background: #ccc; }
.icon-tool { position: relative; margin-right: 17px; }
.icon-tool.more { margin-right: 16px; }
.icon-tool.more::after {
  content: "";
  position: absolute;
  right: -6px;
  bottom: -5px;
  border: 3px solid transparent;
  border-top-color: #555;
  border-bottom: 0;
}

/* docks and 3D view */
.content { flex: 1; min-height: 0; display: flex; }
.panel { display: flex; flex-direction: column; min-height: 0; }
.displays { flex: none; width: 439px; padding-bottom: 4px; }
.views { flex: none; width: 271px; padding-bottom: 2px; }

.dock-title {
  flex: none;
  height: 22px;
  display: flex;
  align-items: center;
  gap: 6px;
  margin: 0;
  padding: 0 2px 0 4px;
  background: #b8b8b8;
  font-size: 14px;
  font-weight: normal;
}
.dock-title > svg { width: 16px; height: 16px; }
.dock-title span { padding-top: 2px; }
.dock-close {
  width: 17px;
  height: 17px;
  margin: 0 0 3px auto;
  padding: 0;
  border: 1px solid #888;
  border-radius: 2px;
  background: #f8f8f8;
}
.dock-close svg { width: 15px; height: 15px; display: block; }

.tree {
  flex: 1;
  min-height: 0;
  overflow: hidden;
  border: 1px solid #b8b8b8;
  background: linear-gradient(#dcdcdc, #dcdcdc) 259px 0 / 1px 100% no-repeat #fff;
}
.displays .tree { border-top: 0; border-left-color: #efefef; padding-top: 1px; }
.tree table { width: 100%; table-layout: fixed; border-collapse: collapse; }
.tree td { height: 19px; padding: 0 0 0 3px; line-height: 19px; white-space: nowrap; overflow: hidden; }
.tree td:first-child { padding: 0; }
.c-name { width: 259px; }
.n { display: flex; align-items: center; height: 19px; }
.sub { padding-left: 20px; }
.n.b { font-weight: bold; color: #2a76c6; }
.tw { flex: none; width: 10px; height: 10px; margin: 0 8px 0 5px; }
.ic { flex: none; width: 15px; height: 15px; margin-right: 7px; }

.views .tree { background-position: 112px 0; }
.views .c-name { width: 112px; }
.views .tree td { height: 17px; line-height: 17px; }
.views .n { height: 17px; }
.strong { font-weight: bold; }

input[type="checkbox"] {
  appearance: none;
  display: block;
  width: 14px;
  height: 14px;
  margin: 0;
  border: 1px solid #b8b8b8;
  background: #fff;
  color: #2264ad;
}
input[type="checkbox"].black { color: #000; }
input[type="checkbox"]:checked::before {
  content: "";
  display: block;
  width: 12px;
  height: 12px;
  background: currentColor;
  clip-path: polygon(10% 50%, 26% 44%, 42% 68%, 80% 8%, 92% 12%, 50% 95%, 36% 95%);
}

.swatch {
  display: inline-block;
  width: 13px;
  height: 13px;
  margin: 0 5px 0 2px;
  vertical-align: -2px;
  border: 1px solid #000;
}
.swatch.dark { background: #303030; }
.swatch.red { background: #ff1900; }

.split { flex: none; height: 4px; display: grid; place-items: center; }
.split.wide { height: 6px; }
.dots { width: 17px; height: 1px; background: repeating-linear-gradient(90deg, #aaa 0 1px, transparent 1px 3px); }
.help { flex: none; height: 78px; border: 1px solid #b8b8b8; background: #fff; }

.actions { flex: none; display: flex; gap: 6px; padding: 6px 2px 0; }
.actions button { flex: 1; }
.actions button, .type-row button, .pause, .status button, select {
  height: 25px;
  padding: 0;
  border: 1px solid #aaa;
  border-radius: 3px;
  background: linear-gradient(#fff, #ececec);
}
.actions button:disabled { color: #bcbcbc; border-color: #c4c4c4; }

.type-row { flex: none; display: flex; align-items: center; padding: 6px 2px 8px; }
.type-row label { width: 43px; }
.type-row select { width: 138px; margin-right: 6px; }
.type-row button { flex: 1; }
select {
  appearance: none;
  padding: 0 5px;
  background:
    linear-gradient(to bottom left, #555 50%, transparent 51%) right 11px center / 4px 4px no-repeat,
    linear-gradient(to bottom right, #555 50%, transparent 51%) right 7px center / 4px 4px no-repeat,
    linear-gradient(#fff, #ececec);
}

.gutter { flex: none; width: 6px; display: grid; place-items: center; }
.vdots { width: 1px; height: 17px; background: repeating-linear-gradient(#aaa 0 1px, transparent 1px 3px); }
.collapse {
  flex: none;
  display: grid;
  place-items: center;
  width: 16px;
  padding: 0;
  border: 1px solid #b8b8b8;
  border-radius: 3px;
  background: #f9f9f9;
}
.collapse.right { margin-right: 6px; border-color: transparent; background: none; }

.view { flex: 1; min-width: 0; background: #303030; }
.view svg { width: 100%; height: 100%; display: block; }
.walls { fill: none; stroke: #050505; }

/* time panel */
.time { flex: none; }
.time-row { display: flex; align-items: center; gap: 7px; padding: 7px 11px 0; }
.time-row label { flex: none; width: 89px; white-space: nowrap; }
.time-row .short { width: 69px; }
.time-row input { flex: 1; min-width: 0; height: 25px; padding: 0 3px; border: 1px solid #aaa; border-radius: 3px; background: #fff; }
.time-row select { width: 120px; }
.pause { width: 80px; display: flex; align-items: center; justify-content: center; gap: 2px; }
.time-row .sync, .time-row .first { margin-left: 9px; }
.time-row .sync { width: 112px; }

.status { flex: none; display: flex; justify-content: space-between; align-items: center; padding: 10px 2px 2px; }
.status button { width: 53px; }
```
